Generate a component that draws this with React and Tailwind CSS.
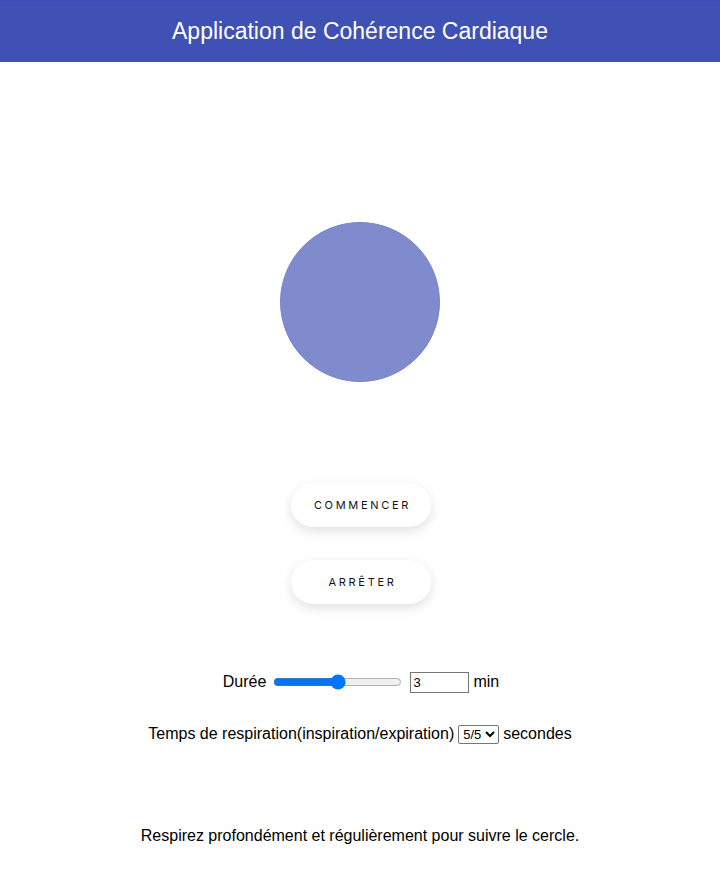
import React from "react";

export default function App() {
  return (
    <div className="min-h-[890px] bg-white" style={{ fontFamily: '"Liberation Sans", Arial, sans-serif' }}>
      <header className="h-[62px] bg-[#3f51b5] border-t border-[#3a4cc4] flex items-center justify-center">
        <h1 className="text-white text-[23px] leading-none">Application de Cohérence Cardiaque</h1>
      </header>
      <div className="flex flex-col items-center">
        <div className="mt-[160px] w-[160px] h-[160px] rounded-full bg-[#7f8bcd] border border-[#7785ca]" />
        <button className="mt-[101px] ml-[2px] w-[140px] h-[44px] rounded-full bg-white shadow-[0_4px_12px_rgba(0,0,0,0.12)] text-[11px] tracking-[2.7px] text-[#111] pl-[3px]" style={{ fontFamily: 'Inter, "Noto Sans", sans-serif' }}>
          COMMENCER
        </button>
        <button className="mt-[33px] ml-[2px] w-[140px] h-[44px] rounded-full bg-white shadow-[0_4px_12px_rgba(0,0,0,0.12)] text-[11px] tracking-[2.7px] text-[#111] pl-[3px]" style={{ fontFamily: 'Inter, "Noto Sans", sans-serif' }}>
          ARRÊTER
        </button>
        <div className="mt-[66px] ml-[2px] flex items-center text-[16px] text-black">
          <span>Durée</span>
          <input type="range" min="1" max="10" defaultValue="5.5" step="0.5" className="ml-[7px] w-[129px] accent-[#0075ff]" />
          <input type="number" defaultValue="3" className="ml-[8px] w-[59px] h-[21px] border border-[#767676] text-[13px] px-[2px]" />
          <span className="ml-[4px]">min</span>
        </div>
        <div className="mt-[28px] flex items-center text-[16px] text-black">
          <span>Temps de respiration(inspiration/expiration)</span>
          <select className="ml-[4px] h-[19px] border border-[#767676] rounded-[2px] text-[13px]" defaultValue="5/5">
            <option>4/6</option>
            <option>5/5</option>
            <option>6/4</option>
          </select>
          <span className="ml-[4px]">secondes</span>
        </div>
        <p className="mt-[78px] text-[16px] text-black">Respirez profondément et régulièrement pour suivre le cercle.</p>
      </div>
    </div>
  );
}
